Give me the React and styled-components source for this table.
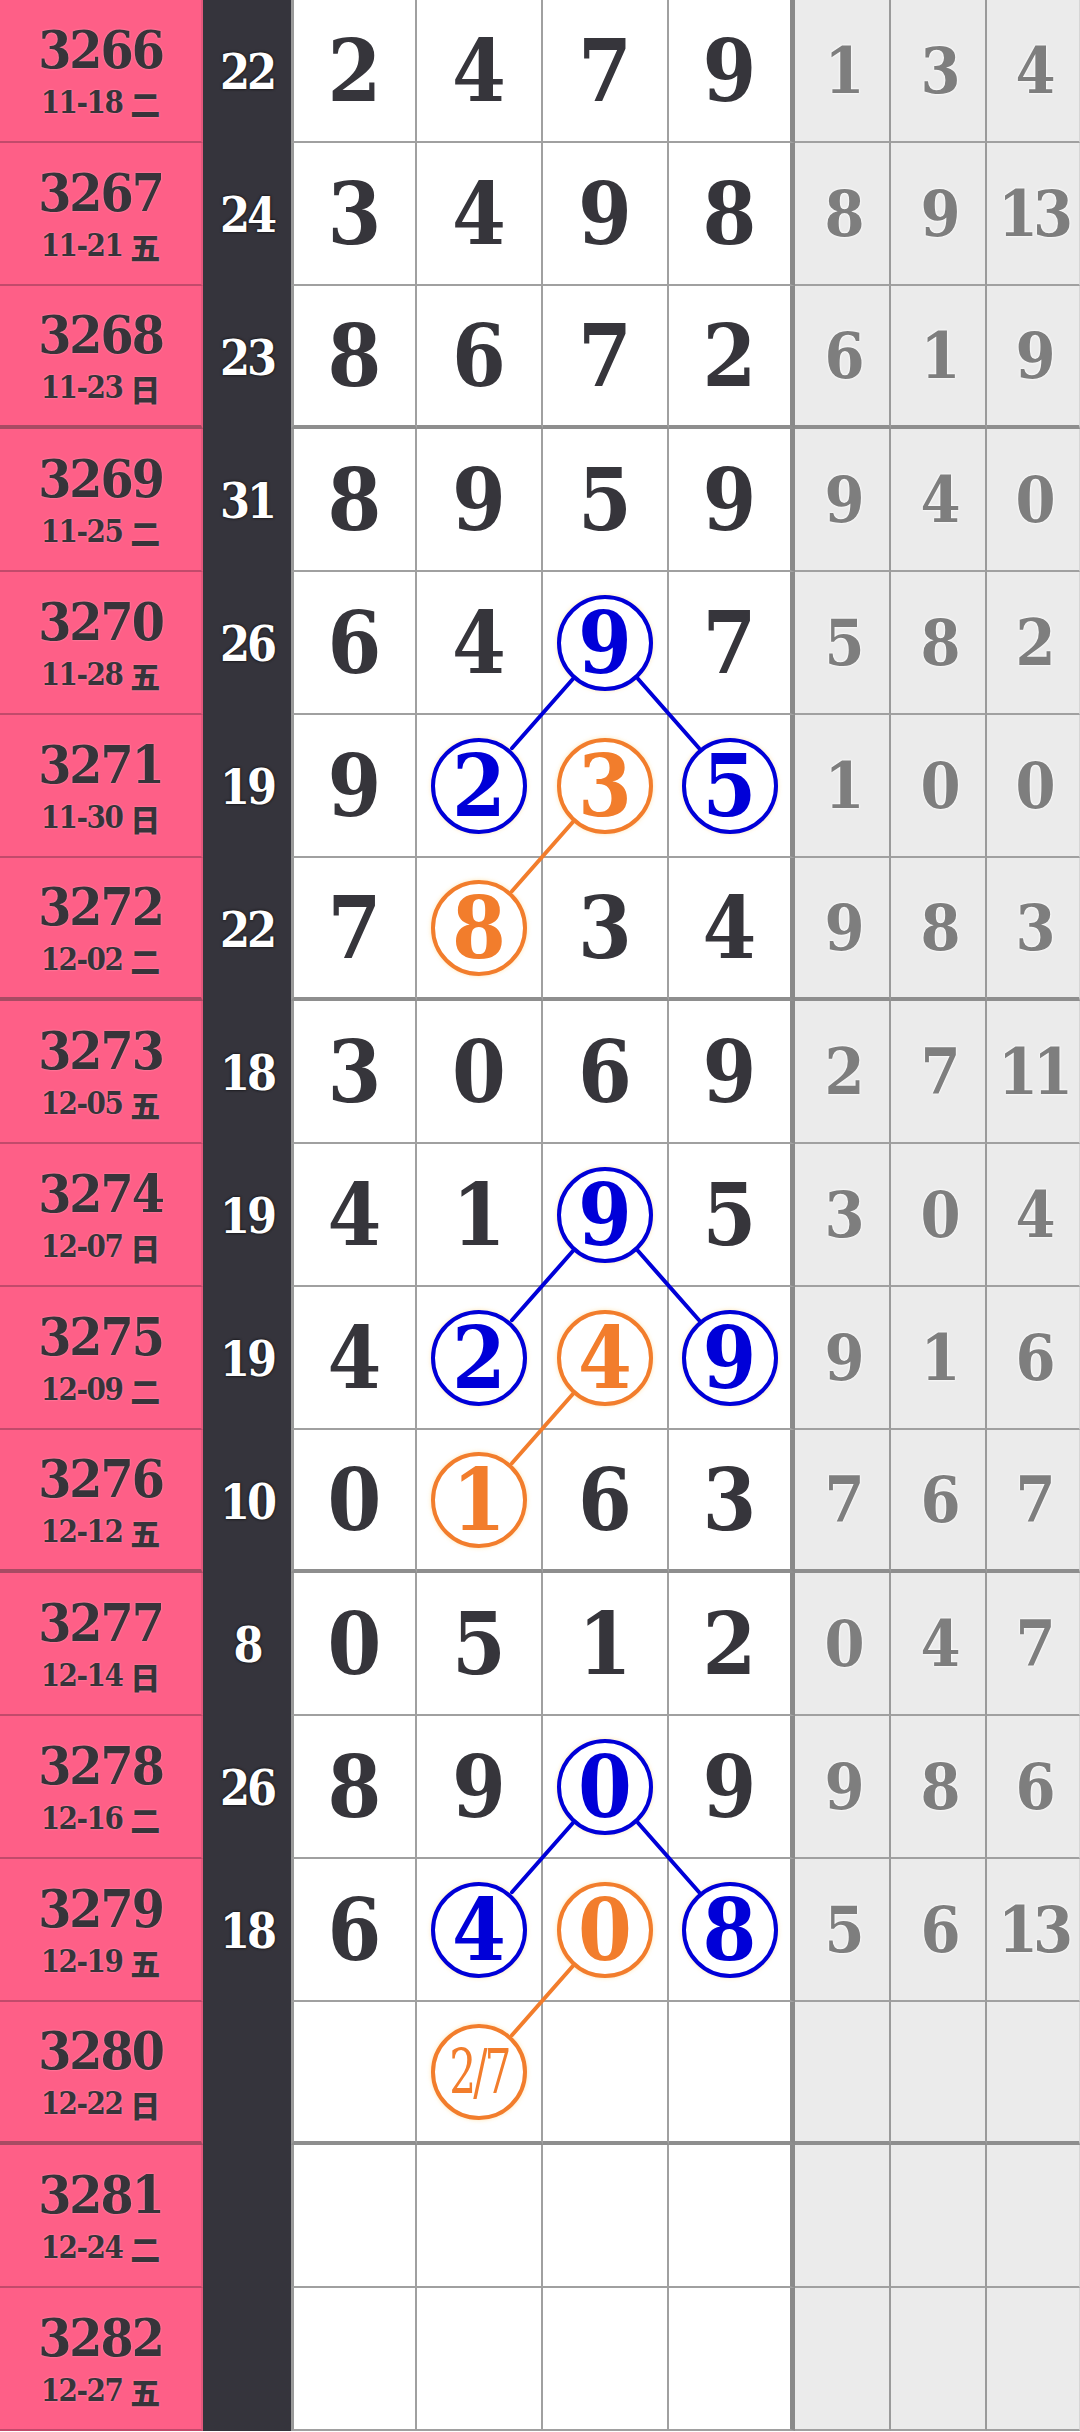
import React from 'react';
import styled, { createGlobalStyle, css } from 'styled-components';

const SERIF = `"DejaVu Serif Condensed", "DejaVu Serif", "Noto Sans CJK SC", serif`;

const ROW_H = 143;
const COL_W = 126;
const RING_R = 49;

const TONES = {
  blue: '#0000d8',
  orange: '#f27d2c',
};

const b = (v) => ({ v, tone: 'blue' });
const o = (v) => ({ v, tone: 'orange' });

const draws = [
  ['3266', '11-18', '二', '22', ['2', '4', '7', '9'], ['1', '3', '4']],
  ['3267', '11-21', '五', '24', ['3', '4', '9', '8'], ['8', '9', '13']],
  ['3268', '11-23', '日', '23', ['8', '6', '7', '2'], ['6', '1', '9']],
  ['3269', '11-25', '二', '31', ['8', '9', '5', '9'], ['9', '4', '0']],
  ['3270', '11-28', '五', '26', ['6', '4', b('9'), '7'], ['5', '8', '2']],
  ['3271', '11-30', '日', '19', ['9', b('2'), o('3'), b('5')], ['1', '0', '0']],
  ['3272', '12-02', '二', '22', ['7', o('8'), '3', '4'], ['9', '8', '3']],
  ['3273', '12-05', '五', '18', ['3', '0', '6', '9'], ['2', '7', '11']],
  ['3274', '12-07', '日', '19', ['4', '1', b('9'), '5'], ['3', '0', '4']],
  ['3275', '12-09', '二', '19', ['4', b('2'), o('4'), b('9')], ['9', '1', '6']],
  ['3276', '12-12', '五', '10', ['0', o('1'), '6', '3'], ['7', '6', '7']],
  ['3277', '12-14', '日', '8', ['0', '5', '1', '2'], ['0', '4', '7']],
  ['3278', '12-16', '二', '26', ['8', '9', b('0'), '9'], ['9', '8', '6']],
  ['3279', '12-19', '五', '18', ['6', b('4'), o('0'), b('8')], ['5', '6', '13']],
  ['3280', '12-22', '日', '', ['', o('2/7'), '', ''], ['', '', '']],
  ['3281', '12-24', '二', '', ['', '', '', ''], ['', '', '']],
  ['3282', '12-27', '五', '', ['', '', '', ''], ['', '', '']],
];

// rows that close a group of four get the heavy rule
const THICK = new Set([2, 6, 10, 14]);

// [row, col, row, col, tone]
const links = [
  [4, 2, 5, 1, 'blue'], [4, 2, 5, 3, 'blue'], [5, 2, 6, 1, 'orange'],
  [8, 2, 9, 1, 'blue'], [8, 2, 9, 3, 'blue'], [9, 2, 10, 1, 'orange'],
  [12, 2, 13, 1, 'blue'], [12, 2, 13, 3, 'blue'], [13, 2, 14, 1, 'orange'],
];

function center(r, c) {
  return [c * COL_W + 62.5, r * ROW_H + 70];
}

function segment([r1, c1, r2, c2]) {
  const [x1, y1] = center(r1, c1);
  const [x2, y2] = center(r2, c2);
  const len = Math.hypot(x2 - x1, y2 - y1);
  const ux = (x2 - x1) / len;
  const uy = (y2 - y1) / len;
  return {
    x1: x1 + ux * RING_R,
    y1: y1 + uy * RING_R,
    x2: x2 - ux * RING_R,
    y2: y2 - uy * RING_R,
  };
}

const GlobalStyle = createGlobalStyle`
  html, body {
    margin: 0;
    padding: 0;
    background: #fff;
  }
`;

const Board = styled.div`
  position: relative;
  width: 1080px;
  font-family: ${SERIF};
`;

const Row = styled.div`
  display: grid;
  grid-template-columns: 203px 88px repeat(4, ${COL_W}px) 96px 96px 1fr;
  height: ${ROW_H}px;
`;

const rule = css`
  box-sizing: border-box;
  border-bottom: ${(p) => (p.$thick ? '4px solid #8e8e8e' : '2px solid #a0a0a0')};
`;

const IssueCell = styled.div`
  box-sizing: border-box;
  background: #fe5f87;
  border-right: 2px solid #e2587c;
  border-bottom: ${(p) => (p.$thick ? '4px solid #a84b63' : '2px solid #c24a6b')};
  display: flex;
  flex-direction: column;
  align-items: center;
  justify-content: center;
  gap: 11px;
  color: #37343a;
  text-shadow: 0 0 2px rgba(255, 190, 205, 0.7);
`;

const IssueNo = styled.div`
  font-size: 53px;
  font-weight: 700;
  line-height: 1;
  letter-spacing: -2px;
`;

const IssueDate = styled.div`
  font-size: 31px;
  font-weight: 700;
  line-height: 1;
  letter-spacing: -1.5px;
  display: flex;
  align-items: center;
  gap: 8px;
`;

const Weekday = styled.span`
  font-family: "Noto Sans CJK SC", sans-serif;
  font-size: 30px;
  font-weight: 900;
  letter-spacing: 0;
`;

const SumCell = styled.div`
  background: #35343c;
  color: #fff;
  display: flex;
  align-items: center;
  justify-content: center;
  font-size: 48px;
  font-weight: 700;
  line-height: 1;
  letter-spacing: -3px;
  text-shadow: 0 0 3px #000;
`;

const DrawCell = styled.div`
  ${rule};
  background: #fff;
  border-left: ${(p) => (p.$first ? '3px solid #9a9a9a' : 'none')};
  border-right: ${(p) => (p.$last ? '5px solid #8a8a8a' : '2px solid #a0a0a0')};
  display: flex;
  align-items: center;
  justify-content: center;
`;

const Digit = styled.span`
  font-size: 86px;
  font-weight: 700;
  line-height: 1;
  color: #36353b;
`;

const Ring = styled.span`
  box-sizing: border-box;
  width: 96px;
  height: 96px;
  border-radius: 50%;
  border: 4px solid ${(p) => TONES[p.$tone]};
  background: #fff;
  color: ${(p) => TONES[p.$tone]};
  display: flex;
  align-items: center;
  justify-content: center;
  box-shadow: 0 0 4px rgba(255, 220, 150, 0.7);
  position: relative;
  z-index: 1;
`;

const RingDigit = styled.span`
  font-size: 86px;
  font-weight: 700;
  line-height: 1;
`;

const RingFraction = styled.span`
  display: inline-block;
  font-size: 62px;
  font-weight: 400;
  line-height: 1;
  letter-spacing: -4px;
  transform: scaleX(0.76);
`;

const MissCell = styled.div`
  ${rule};
  background: #ebebeb;
  border-right: ${(p) => (p.$last ? '1px solid #d6d6d6' : '2px solid #9a9a9a')};
  display: flex;
  align-items: center;
  justify-content: center;
`;

const MissNum = styled.span`
  font-size: 64px;
  font-weight: 700;
  line-height: 1;
  letter-spacing: -5px;
  color: #7e7e7e;
  text-shadow: 0 0 3px #fff, 0 0 2px #fff;
`;

const Links = styled.svg`
  position: absolute;
  top: 0;
  left: 291px;
  pointer-events: none;
  z-index: 2;
`;

function Pick({ item }) {
  if (!item) return null;
  if (typeof item === 'string') return <Digit>{item}</Digit>;
  return (
    <Ring $tone={item.tone}>
      {item.v.includes('/') ? (
        <RingFraction>{item.v}</RingFraction>
      ) : (
        <RingDigit>{item.v}</RingDigit>
      )}
    </Ring>
  );
}

function DrawRow({ row, thick }) {
  const [no, date, day, sum, nums, rest] = row;
  return (
    <Row>
      <IssueCell $thick={thick}>
        <IssueNo>{no}</IssueNo>
        <IssueDate>
          {date}
          <Weekday>{day}</Weekday>
        </IssueDate>
      </IssueCell>
      <SumCell>{sum}</SumCell>
      {nums.map((n, i) => (
        <DrawCell key={i} $thick={thick} $first={i === 0} $last={i === 3}>
          <Pick item={n} />
        </DrawCell>
      ))}
      {rest.map((n, i) => (
        <MissCell key={i} $thick={thick} $last={i === 2}>
          <MissNum>{n}</MissNum>
        </MissCell>
      ))}
    </Row>
  );
}

export default function App() {
  return (
    <>
      <GlobalStyle />
      <Board>
        {draws.map((row, i) => (
          <DrawRow key={row[0]} row={row} thick={THICK.has(i)} />
        ))}
        <Links width={COL_W * 4} height={ROW_H * draws.length}>
          {links.map((l, i) => {
            const s = segment(l);
            return (
              <line
                key={i}
                {...s}
                stroke={TONES[l[4]]}
                strokeWidth={4}
                strokeLinecap="round"
              />
            );
          })}
        </Links>
      </Board>
    </>
  );
}
